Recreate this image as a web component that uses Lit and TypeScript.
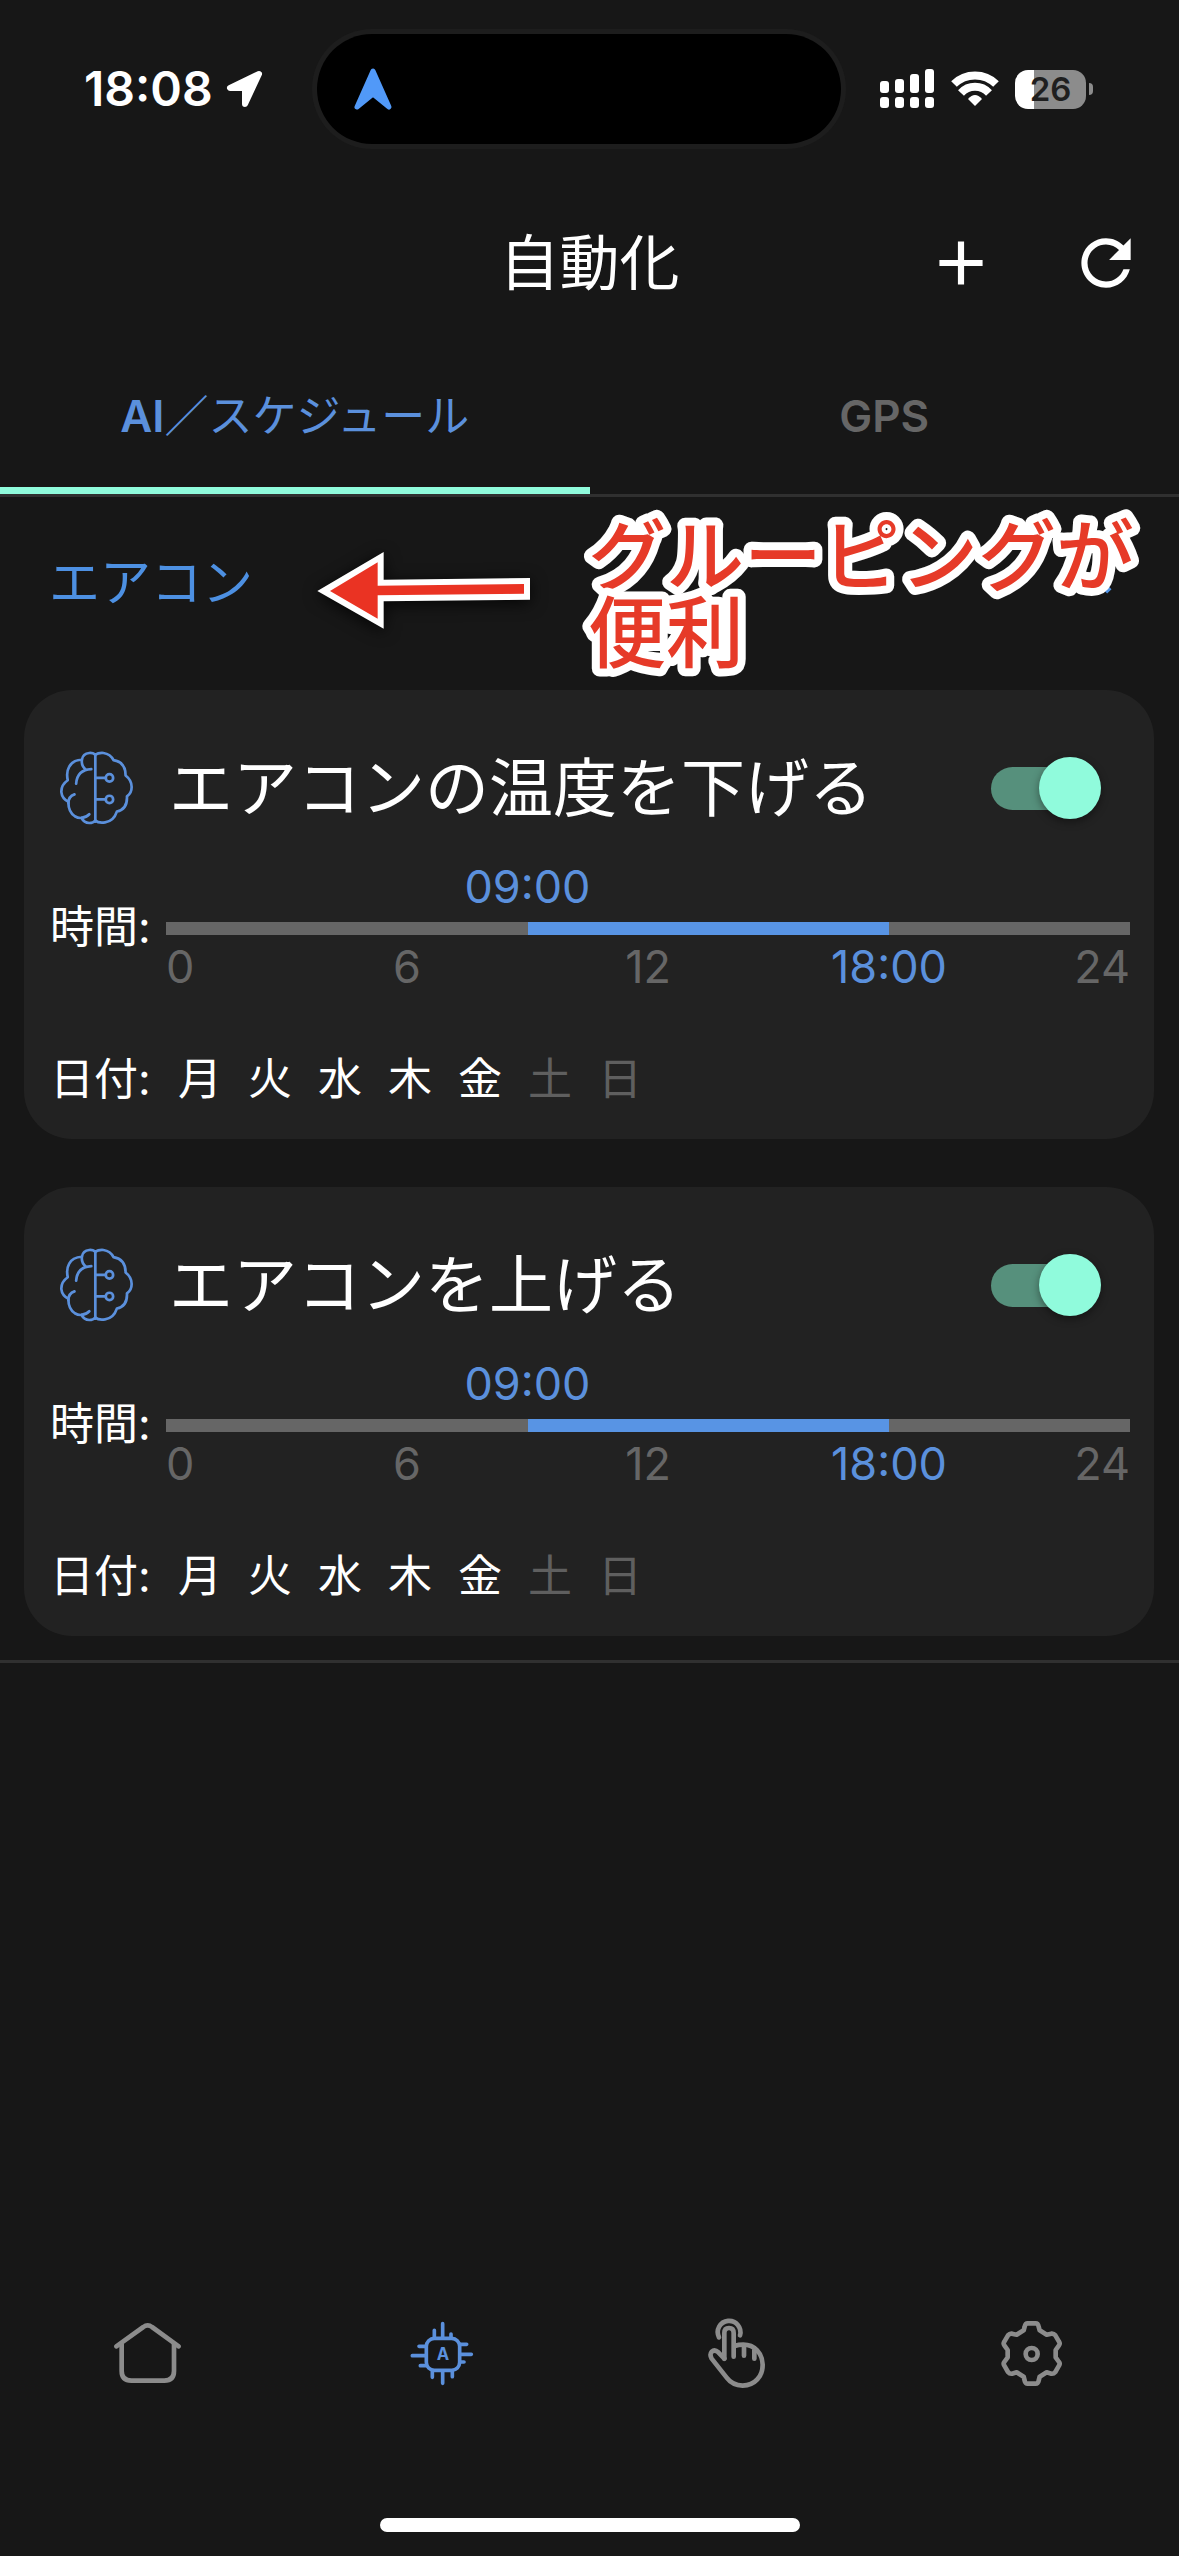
import { LitElement, html, svg, css } from "lit";
import { customElement, property, state } from "lit/decorators.js";

interface Automation {
  id: string;
  name: string;
  enabled: boolean;
  start: number;
  end: number;
  days: string[];
}

const WEEK = ["月", "火", "水", "木", "金", "土", "日"];
const clock = (h: number) => `${String(h).padStart(2, "0")}:00`;

const homeIcon = svg`
  <svg class="icon" viewBox="51 42 240 240" aria-hidden="true">
    <path d="M79 139 L160 81 Q173 71 186 81 L266 139"/>
    <path d="M95 132 V213 Q95 242 124 242 H223 Q252 242 252 213 V132"/>
  </svg>`;

const chipIcon = svg`
  <svg class="icon thin" viewBox="936 42 240 240" aria-hidden="true">
    <rect x="1009" y="115" width="100" height="96" rx="24"/>
    <path d="M1033 91V112M1058 71V112M1083 102V112M987 139H1008M967 167H1008M991 197H1010M1112 133H1130M1112 163H1144M1112 186H1122M1027 213V232M1058 213V250M1087 213V230"/>
    <text class="chip-letter" x="1059" y="180" text-anchor="middle">A</text>
  </svg>`;

const tapIcon = svg`
  <svg class="icon" viewBox="51 42 240 240" aria-hidden="true">
    <path d="M117 112 A34 34 0 1 1 180 106"/>
    <path d="M133 176 V99 Q133 84 147 84 Q161 84 161 99 V170"/>
    <path d="M133 176 L115 157 Q104 147 95 155 Q88 163 95 176 L140 233 Q157 256 188 257 C225 256 248 229 248 194 C247 160 224 134 190 134 Q175 134 164 138"/>
    <path d="M192 138V167M223 150V176"/>
  </svg>`;

const gearIcon = svg`
  <svg class="icon" viewBox="936 42 240 240" aria-hidden="true">
    <path d="M1043 70 H1067 Q1074 70 1076 80 L1079 91 L1100 104 L1114 101 Q1121 100 1126 106 L1137 125 Q1141 131 1137 136 L1127 150 V172 L1137 186 Q1141 191 1137 197 L1126 216 Q1121 222 1114 221 L1100 217 L1079 230 L1076 242 Q1074 251 1067 251 H1043 Q1036 251 1034 242 L1031 230 L1010 217 L996 221 Q989 222 984 216 L973 197 Q969 191 973 186 L983 172 V150 L973 136 Q969 131 973 125 L984 106 Q989 100 996 101 L1010 104 L1031 91 L1034 80 Q1036 70 1043 70Z"/>
    <circle cx="1055" cy="162" r="18"/>
  </svg>`;

const brainIcon = svg`
  <svg class="brain" viewBox="58 33 220 220" aria-hidden="true">
    <path d="M166 43V243"/>
    <path d="M166 44 Q158 38 148 39 Q129 41 126 59 Q98 60 88 80 Q79 96 84 120 Q64 134 65 155 Q67 174 86 184 Q85 213 105 227 Q115 233 125 232 Q132 247 148 247 Q160 247 166 240"/>
    <path d="M126 59 Q124 78 138 88M154 87 Q112 89 109 130M104 162 Q86 168 86 188M148 221 Q140 230 125 232"/>
    <path d="M166 44 Q175 38 190 39 Q211 42 220 60 Q256 66 256 106 Q274 120 274 140 Q274 158 260 168 Q262 206 230 213 Q221 241 195 245 Q176 248 166 240"/>
    <path d="M168 113H196M168 177H196"/>
    <circle cx="208" cy="113" r="11"/>
    <circle cx="208" cy="177" r="11"/>
  </svg>`;

@customElement("automation-card")
class AutomationCard extends LitElement {
  @property({ attribute: false }) item!: Automation;

  static styles = css`
    :host {
      display: block;
      background: #222222;
      border-radius: 48px;
      padding: 50px 24px 33px 26px;
    }
    .head {
      display: flex;
      align-items: center;
      height: 96px;
      padding: 0 29px 0 9px;
    }
    .brain {
      width: 74px;
      height: 74px;
      fill: none;
      stroke: #5b90dc;
      stroke-width: 8;
      stroke-linecap: round;
      stroke-linejoin: round;
    }
    .name {
      flex: 1;
      margin: 0 0 0 36px;
      font-size: 64px;
      line-height: 96px;
      font-weight: 400;
      color: #ffffff;
    }
    .switch {
      appearance: none;
      display: grid;
      align-items: center;
      width: 110px;
      height: 62px;
      margin: 0;
    }
    .switch::before,
    .switch::after {
      content: "";
      grid-area: 1 / 1;
    }
    .switch::before {
      width: 102px;
      height: 43px;
      border-radius: 22px;
      background: #6b6b6b;
    }
    .switch::after {
      width: 62px;
      height: 62px;
      border-radius: 50%;
      background: #bdbdbd;
      box-shadow: 0 3px 8px rgba(0, 0, 0, 0.4);
    }
    .switch:checked::before {
      background: #56907c;
    }
    .switch:checked::after {
      justify-self: end;
      background: #90fbdc;
    }
    .time {
      display: flex;
      align-items: center;
      margin-top: 24px;
    }
    .label {
      width: 116px;
      flex: none;
      font-size: 44px;
      line-height: 54px;
      color: #ffffff;
    }
    .range {
      flex: 1;
      font-size: 45px;
      line-height: 54px;
      color: #666666;
    }
    .start {
      text-align: center;
    }
    .active {
      color: #5b90dc;
    }
    .track {
      display: flex;
      height: 13px;
      margin: 8px 0 5px;
      background: #666666;
    }
    .fill {
      background: #5894e4;
    }
    .scale {
      display: grid;
      grid-template-columns: 1fr 2fr 2fr 2fr 1fr;
      text-align: center;
    }
    .first {
      text-align: left;
    }
    .last {
      text-align: right;
    }
    .dates {
      display: flex;
      align-items: center;
      margin-top: 58px;
      color: #ffffff;
    }
    .days {
      display: flex;
      gap: 26px;
      margin: 0;
      padding: 0 0 0 12px;
      list-style: none;
      font-size: 44px;
      line-height: 54px;
    }
    .off {
      color: #5f5f5f;
    }
  `;

  render() {
    const { id, name, enabled, start, end, days } = this.item;
    const pct = (h: number) => `${(h / 24) * 100}%`;
    return html`
      <div class="head">
        ${brainIcon}
        <label class="name" for=${id}>${name}</label>
        <input class="switch" type="checkbox" role="switch" id=${id} .checked=${enabled} />
      </div>
      <div class="time">
        <span class="label">時間:</span>
        <div class="range">
          <div class="start active" style="width:${pct(start * 2)}">${clock(start)}</div>
          <div class="track">
            <span style="width:${pct(start)}"></span>
            <span class="fill" style="width:${pct(end - start)}"></span>
          </div>
          <div class="scale">
            <span class="first">0</span>
            <span>6</span>
            <span>12</span>
            <span class="active">${clock(end)}</span>
            <span class="last">24</span>
          </div>
        </div>
      </div>
      <div class="dates">
        <span class="label">日付:</span>
        <ul class="days">
          ${WEEK.map((d) => html`<li class=${days.includes(d) ? "on" : "off"}>${d}</li>`)}
        </ul>
      </div>
    `;
  }
}

@customElement("app-root")
class AppRoot extends LitElement {
  @state() private items: Automation[] = [
    { id: "cool", name: "エアコンの温度を下げる", enabled: true, start: 9, end: 18, days: WEEK.slice(0, 5) },
    { id: "warm", name: "エアコンを上げる", enabled: true, start: 9, end: 18, days: WEEK.slice(0, 5) },
  ];

  static styles = css`
    :host {
      display: flex;
      flex-direction: column;
      min-height: 100vh;
      box-sizing: border-box;
      background: #171717;
      color: #ffffff;
      font-family: Inter, "Noto Sans CJK JP", sans-serif;
    }
    button {
      appearance: none;
      border: 0;
      margin: 0;
      padding: 0;
      background: none;
      color: inherit;
      font: inherit;
    }
    .status {
      display: flex;
      align-items: center;
      height: 110px;
      padding: 34px 86px 0 84px;
    }
    .clock {
      font-size: 48px;
      line-height: 60px;
      font-weight: 600;
    }
    .location {
      width: 40px;
      height: 40px;
      margin: 0 52px 0 12px;
      fill: #ffffff;
      stroke: #ffffff;
      stroke-width: 6;
      stroke-linejoin: round;
    }
    .island {
      flex: 1;
      display: flex;
      align-items: center;
      height: 110px;
      padding-left: 35px;
      box-sizing: border-box;
      border-radius: 55px;
      background: #000000;
      box-shadow: 0 0 0 5px #1d1d1d;
    }
    .nav-arrow {
      width: 42px;
      height: 44px;
      fill: #5199f8;
      stroke: #5199f8;
      stroke-width: 5;
      stroke-linejoin: round;
    }
    .signal {
      width: 54px;
      height: 40px;
      margin-left: 39px;
      fill: #ffffff;
    }
    .wifi {
      width: 48px;
      height: 40px;
      margin: 0 16px 0 17px;
      fill: none;
      stroke: #ffffff;
      stroke-width: 8;
    }
    .solid {
      fill: #ffffff;
      stroke: none;
    }
    .battery {
      display: flex;
      align-items: center;
      gap: 3px;
    }
    .cell {
      width: 71px;
      height: 39px;
      border-radius: 13px;
      background: linear-gradient(to right, #ffffff 27%, #8c8c8c 27%);
      color: #1f1f1f;
      font-size: 33px;
      line-height: 39px;
      font-weight: 600;
      text-align: center;
    }
    .nub {
      width: 4px;
      height: 12px;
      border-radius: 0 4px 4px 0;
      background: #8c8c8c;
    }
    .header {
      display: grid;
      grid-template-columns: 1fr auto 1fr;
      align-items: center;
      height: 170px;
      margin-top: 34px;
      padding: 0 36px;
    }
    .title {
      grid-column: 2;
      margin: 0;
      font-size: 60px;
      line-height: 80px;
      font-weight: 400;
    }
    .actions {
      display: flex;
      justify-content: flex-end;
      gap: 71px;
    }
    .glyph {
      display: block;
      width: 74px;
      height: 74px;
      fill: currentColor;
    }
    .tabs {
      display: grid;
      grid-template-columns: 1fr 1fr;
      border-bottom: 3px solid #303030;
    }
    .tab {
      height: 146px;
      padding-bottom: 3px;
      border-bottom: 7px solid transparent;
      font-size: 44px;
      line-height: 56px;
      font-weight: 600;
      color: #666666;
    }
    .kana {
      font-weight: 400;
    }
    .tab.selected {
      color: #5b90dc;
      border-bottom-color: #90fbdc;
    }
    .group-head {
      position: relative;
      display: flex;
      align-items: center;
      justify-content: space-between;
      height: 171px;
      padding: 0 49px 22px;
      color: #4d90e2;
    }
    .group-name {
      margin: 0;
      font-size: 51px;
      line-height: 64px;
      font-weight: 400;
    }
    .note-arrow {
      position: absolute;
      left: 300px;
      top: 33px;
      width: 250px;
      height: 120px;
      filter: drop-shadow(0 3px 8px rgba(0, 0, 0, 0.8));
    }
    .note {
      position: absolute;
      left: 580px;
      top: 0;
      width: 580px;
      height: 193px;
    }
    .note-text {
      font-size: 78px;
      font-weight: 500;
      fill: #e63a28;
      stroke: #ffffff;
      stroke-width: 16;
      stroke-linejoin: round;
      paint-order: stroke;
    }
    .cards {
      display: flex;
      flex-direction: column;
      gap: 48px;
      padding: 0 25px 24px 24px;
      border-bottom: 3px solid #303030;
    }
    .bottom {
      display: grid;
      grid-template-columns: repeat(4, 1fr);
      margin-top: auto;
      height: 128px;
    }
    .dest {
      display: flex;
      align-items: center;
      justify-content: center;
      color: #8c8c8c;
    }
    .dest.current {
      color: #5b90dc;
    }
    .icon {
      width: 80px;
      height: 80px;
      fill: none;
      stroke: currentColor;
      stroke-width: 14;
      stroke-linecap: round;
      stroke-linejoin: round;
    }
    .icon.thin {
      stroke-width: 11;
    }
    .chip-letter {
      font-size: 50px;
      font-weight: 700;
      fill: currentColor;
      stroke: none;
    }
    .home-bar {
      width: 420px;
      height: 14px;
      margin: 100px auto 24px;
      border-radius: 7px;
      background: #ffffff;
    }
  `;

  render() {
    return html`
      <div class="status">
        <span class="clock">18:08</span>
        <svg class="location" viewBox="225 68 40 40" aria-hidden="true">
          <path d="M259 73 L230 87 H245 V103Z" />
        </svg>
        <div class="island">
          <svg class="nav-arrow" viewBox="352 65 42 44" aria-hidden="true">
            <path d="M373 69 L357 105 L373 92 L389 105Z" />
          </svg>
        </div>
        <svg class="signal" viewBox="880 68 54 40" aria-hidden="true">
          <rect x="880" y="80" width="9" height="12" rx="3" />
          <rect x="895" y="78" width="9" height="14" rx="3" />
          <rect x="910" y="73" width="9" height="19" rx="3" />
          <rect x="925" y="68" width="9" height="24" rx="3" />
          <rect x="880" y="96" width="9" height="11" rx="3" />
          <rect x="895" y="96" width="9" height="11" rx="3" />
          <rect x="910" y="96" width="9" height="11" rx="3" />
          <rect x="925" y="96" width="9" height="11" rx="3" />
        </svg>
        <svg class="wifi" viewBox="951 68 48 40" aria-hidden="true">
          <path d="M954 83 A30 30 0 0 1 996 83" />
          <path d="M961 92 A19 19 0 0 1 989 92" />
          <path class="solid" d="M975 105 L968 98 Q975 90 982 98Z" />
        </svg>
        <div class="battery">
          <span class="cell">26</span>
          <span class="nub"></span>
        </div>
      </div>

      <header class="header">
        <h1 class="title">自動化</h1>
        <div class="actions">
          <button aria-label="追加">
            <svg class="glyph" viewBox="0 0 24 24"><path d="M19 13h-6v6h-2v-6H5v-2h6V5h2v6h6v2z" /></svg>
          </button>
          <button aria-label="更新">
            <svg class="glyph" viewBox="0 0 24 24">
              <path d="M17.65 6.35C16.2 4.9 14.21 4 12 4c-4.42 0-7.99 3.58-7.99 8s3.57 8 7.99 8c3.73 0 6.84-2.55 7.73-6h-2.08c-.82 2.33-3.04 4-5.65 4-3.31 0-6-2.69-6-6s2.69-6 6-6c1.66 0 3.14.69 4.22 1.78L13 11h7V4l-2.35 2.35z" />
            </svg>
          </button>
        </div>
      </header>

      <div class="tabs" role="tablist">
        <button class="tab selected" role="tab" aria-selected="true">AI<span class="kana">／スケジュール</span></button>
        <button class="tab" role="tab" aria-selected="false">GPS</button>
      </div>

      <section>
        <div class="group-head">
          <h2 class="group-name">エアコン</h2>
          <button aria-label="閉じる">
            <svg class="glyph" viewBox="0 0 24 24"><path d="M7.41 15.41L12 10.83l4.59 4.58L18 14l-6-6-6 6z" /></svg>
          </button>
          <svg class="note-arrow" viewBox="0 0 750 360" aria-hidden="true">
            <path fill="#ffffff" d="M52 183 L251 66 V149 L690 144 V209 L251 214 V296Z" />
            <path fill="#ea3323" d="M90 183 L233 97 V167 L672 162 V191 L233 196 V266Z" />
          </svg>
          <svg class="note" viewBox="580 497 580 193">
            <text class="note-text" x="588" y="585">グルーピングが</text>
            <text class="note-text" x="588" y="662">便利</text>
          </svg>
        </div>
        <div class="cards">
          ${this.items.map((i) => html`<automation-card .item=${i}></automation-card>`)}
        </div>
      </section>

      <nav class="bottom">
        <a class="dest" href="#home" aria-label="ホーム">${homeIcon}</a>
        <a class="dest current" href="#automation" aria-label="自動化" aria-current="page">${chipIcon}</a>
        <a class="dest" href="#scenes" aria-label="操作">${tapIcon}</a>
        <a class="dest" href="#settings" aria-label="設定">${gearIcon}</a>
      </nav>
      <div class="home-bar"></div>
    `;
  }
}
